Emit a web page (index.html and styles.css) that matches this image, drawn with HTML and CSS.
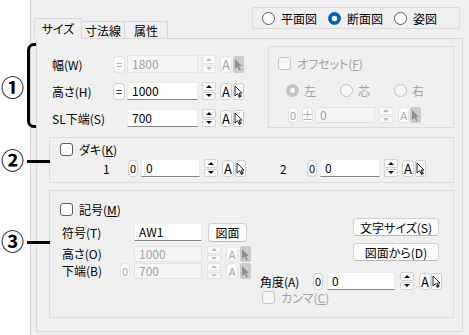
FILE: index.html
```html
<!DOCTYPE html>
<html>
<head>
	<title>size</title>
	<meta charset="utf-8">
	<link rel="stylesheet" href="styles.css">
</head>
<body>
<div class='marks'>
	<span class='num n1'>①</span>
	<span class='brace'></span>
	<span class='num n2'>②</span>
	<span class='tick t2'></span>
	<span class='num n3'>③</span>
	<span class='tick t3'></span>
</div>
<div class='gutter'></div>
<div class='dialog'>
	<div class='head'>
		<div class='tabs'>
			<div class='tab on w48'>サイズ</div>
			<div class='tab w44'>寸法線</div>
			<div class='tab w44'>属性</div>
		</div>
		<div class='views box'>
			<label class='opt'><i class='radio'></i>平面図</label>
			<label class='opt'><i class='radio on'></i>断面図</label>
			<label class='opt'><i class='radio'></i>姿図</label>
		</div>
	</div>
	<div class='panel'>
		<div class='size'>
			<div class='fields'>
				<div class='row'>
					<span class='lbl l61'>幅(W)</span>
					<span class='sq off w12'>=</span>
					<span class='inp off w71 first'>1800</span>
					<span class='spin off'><i></i><i></i></span>
					<span class='btnA off'>A</span>
					<span class='pick off'><svg width='9' height='13' viewBox='0 0 9 13'><path d='M1 1v10l2.5-2.3 1.8 3.8 1.5-.7-1.8-3.7H8z'/></svg></span>
				</div>
				<div class='row'>
					<span class='lbl l61'>高さ(H)</span>
					<span class='sq w12'>=</span>
					<span class='inp w71 first'>1000</span>
					<span class='spin'><i></i><i></i></span>
					<span class='btnA'>A</span>
					<span class='pick'><svg width='9' height='13' viewBox='0 0 9 13'><path d='M1 1v10l2.5-2.3 1.8 3.8 1.5-.7-1.8-3.7H8z'/><path class='dot' d='M5 9.5h2.5v2.5H5z'/></svg></span>
				</div>
				<div class='row'>
					<span class='lbl l61'>SL下端(S)</span>
					<span class='sq blank w12'></span>
					<span class='inp w71 first'>700</span>
					<span class='spin'><i></i><i></i></span>
					<span class='btnA'>A</span>
					<span class='pick'><svg width='9' height='13' viewBox='0 0 9 13'><path d='M1 1v10l2.5-2.3 1.8 3.8 1.5-.7-1.8-3.7H8z'/><path class='dot' d='M5 9.5h2.5v2.5H5z'/></svg></span>
				</div>
			</div>
			<div class='offset box'>
				<label class='check off'><i class='chk'></i><span>オフセット(<span class='key'>F</span>)</span></label>
				<div class='sides'>
					<label class='opt off'><i class='radio on'></i>左</label>
					<label class='opt off'><i class='radio'></i>芯</label>
					<label class='opt off'><i class='radio'></i>右</label>
				</div>
				<div class='row short shift'>
					<span class='sq off w10'>0</span>
					<span class='sq off w11 pm'>±</span>
					<span class='inp off w60'>0</span>
					<span class='spin off'><i></i><i></i></span>
					<span class='btnA off'>A</span>
					<span class='pick off'><svg width='9' height='13' viewBox='0 0 9 13'><path d='M1 1v10l2.5-2.3 1.8 3.8 1.5-.7-1.8-3.7H8z'/></svg></span>
				</div>
			</div>
		</div>
		<div class='daki box'>
			<label class='check'><i class='chk'></i><span>ダキ(<span class='key'>K</span>)</span></label>
			<div class='row pair'>
				<span class='idx one'>1</span>
				<span class='sq w10'>0</span>
				<span class='inp w59'>0</span>
				<span class='spin'><i></i><i></i></span>
				<span class='btnA'>A</span>
				<span class='pick'><svg width='9' height='13' viewBox='0 0 9 13'><path d='M1 1v10l2.5-2.3 1.8 3.8 1.5-.7-1.8-3.7H8z'/><path class='dot' d='M5 9.5h2.5v2.5H5z'/></svg></span>
				<span class='idx two'>2</span>
				<span class='sq w10'>0</span>
				<span class='inp w60'>0</span>
				<span class='spin'><i></i><i></i></span>
				<span class='btnA'>A</span>
				<span class='pick'><svg width='9' height='13' viewBox='0 0 9 13'><path d='M1 1v10l2.5-2.3 1.8 3.8 1.5-.7-1.8-3.7H8z'/><path class='dot' d='M5 9.5h2.5v2.5H5z'/></svg></span>
			</div>
		</div>
		<div class='mark box'>
			<div class='mleft'>
				<label class='check'><i class='chk'></i><span>記号(<span class='key'>M</span>)</span></label>
				<div class='row sym'>
					<span class='lbl l58'>符号(T)</span>
					<span class='sq blank w10'></span>
					<span class='inp w68'>AW1</span>
					<span class='btn draw'>図面</span>
				</div>
				<div class='row short hgt'>
					<span class='lbl l58'>高さ(O)</span>
					<span class='sq blank w10'></span>
					<span class='inp off w68'>1000</span>
					<span class='spin off'><i></i><i></i></span>
					<span class='btnA off'>A</span>
					<span class='pick off'><svg width='9' height='13' viewBox='0 0 9 13'><path d='M1 1v10l2.5-2.3 1.8 3.8 1.5-.7-1.8-3.7H8z'/></svg></span>
				</div>
				<div class='row short low'>
					<span class='lbl l58'>下端(B)</span>
					<span class='sq off w10'>0</span>
					<span class='inp off w68'>700</span>
					<span class='spin off'><i></i><i></i></span>
					<span class='btnA off'>A</span>
					<span class='pick off'><svg width='9' height='13' viewBox='0 0 9 13'><path d='M1 1v10l2.5-2.3 1.8 3.8 1.5-.7-1.8-3.7H8z'/></svg></span>
				</div>
			</div>
			<div class='mright'>
				<span class='btn wide'>文字サイズ(S)</span>
				<span class='btn wide'>図面から(D)</span>
				<div class='row angle'>
					<span class='lbl l53'>角度(A)</span>
					<span class='sq w10'>0</span>
					<span class='inp w68'>0</span>
					<span class='spin'><i></i><i></i></span>
					<span class='btnA'>A</span>
					<span class='pick'><svg width='9' height='13' viewBox='0 0 9 13'><path d='M1 1v10l2.5-2.3 1.8 3.8 1.5-.7-1.8-3.7H8z'/><path class='dot' d='M5 9.5h2.5v2.5H5z'/></svg></span>
				</div>
				<label class='check off comma'><i class='chk'></i><span>カンマ(<span class='key'>C</span>)</span></label>
			</div>
		</div>
	</div>
</div>
</body>
</html>
```

FILE: styles.css
```css
body {
	margin: 0;
	width: 469px;
	height: 335px;
	overflow: hidden;
	display: flex;
	position: relative;
	background: #fff;
	color: #000;
	font: 12px "Noto Sans CJK JP", sans-serif;
	font-feature-settings: "palt";
}
.key {
	text-decoration: underline;
	text-decoration-thickness: 1px;
	text-underline-offset: 1px;
}

/* annotations drawn over the dialog */
.marks {
	position: absolute;
	top: 0;
	left: 0;
	width: 60px;
	height: 335px;
	z-index: 5;
	pointer-events: none;
}
.num {
	position: absolute;
	left: 1px;
	font: bold 23px/1 "Noto Sans CJK JP", sans-serif;
}
.n1 {
	top: 75px;
}
.n2 {
	top: 148px;
}
.n3 {
	top: 229px;
}
.brace {
	position: absolute;
	left: 27px;
	top: 43px;
	width: 9px;
	height: 85px;
	box-sizing: border-box;
	border: 3px solid #000;
	border-right: none;
	border-radius: 7px 0 0 7px;
}
.tick {
	position: absolute;
	left: 27px;
	width: 23px;
	height: 3px;
	background: #000;
}
.t2 {
	top: 160px;
}
.t3 {
	top: 241px;
}

.gutter {
	width: 30px;
	flex: none;
}
.dialog {
	flex: 1;
	background: #f0f0f0;
	border-left: 1px solid #cfcfcf;
	display: flex;
	flex-direction: column;
}
.head {
	height: 38px;
	display: flex;
	flex: none;
}
.tabs {
	display: flex;
	align-items: flex-end;
	margin-left: 4px;
}
.tab {
	height: 17px;
	box-sizing: border-box;
	border: 1px solid #d9d9d9;
	border-bottom: none;
	margin-left: -1px;
	display: flex;
	align-items: center;
	justify-content: center;
}
.tab.on {
	height: 21px;
	margin-bottom: -1px;
	padding-bottom: 1px;
	background: #f0f0f0;
	position: relative;
	z-index: 1;
}
.w48 {
	width: 48px;
}
.w44 {
	width: 44px;
}
.box {
	border: 1px solid #dcdcdc;
	box-sizing: border-box;
}
.views {
	margin: 7px 9px 0 auto;
	width: 208px;
	height: 22px;
	display: flex;
	align-items: center;
	padding-left: 9px;
}
.views .opt {
	margin-right: 11px;
}
.opt {
	display: flex;
	align-items: center;
	gap: 6px;
}
.radio {
	width: 13px;
	height: 13px;
	box-sizing: border-box;
	border: 1px solid #5c5c5c;
	border-radius: 50%;
	background: #fff;
}
.radio.on {
	border-color: #005fb8;
	background: radial-gradient(circle, #fff 2.4px, #005fb8 3.2px);
}
.off {
	color: #a3a3a3;
}
.off .radio {
	border-color: #c2c2c2;
	background: #f6f6f6;
}
.off .radio.on {
	border-color: #c2c2c2;
	background: radial-gradient(circle, #fff 2px, #c2c2c2 2.8px);
}
.check {
	display: flex;
	align-items: center;
	gap: 6px;
	height: 13px;
}
.chk {
	width: 13px;
	height: 13px;
	box-sizing: border-box;
	border: 1px solid #5c5c5c;
	border-radius: 3px;
	background: #fff;
}
.off .chk {
	border-color: #c6c6c6;
	background: #f6f6f6;
}

.panel {
	margin-left: 5px;
	width: 427px;
	height: 294px;
	box-sizing: border-box;
	border: 1px solid #d9d9d9;
	background: #f0f0f0;
	padding: 0 8px 0 12px;
}
.size {
	height: 98px;
	display: flex;
}
.fields {
	width: 219px;
	box-sizing: border-box;
	padding: 16px 0 0 3px;
	display: flex;
	flex-direction: column;
	gap: 9px;
}
.row {
	display: flex;
	align-items: center;
	height: 18px;
}
.row.short {
	height: 16px;
}
.lbl {
	flex: none;
}
.short .lbl {
	line-height: 16px;
}
.l61 {
	width: 61px;
}
.l58 {
	width: 58px;
}
.l53 {
	width: 53px;
}
.sq {
	height: 17px;
	box-sizing: border-box;
	border: 1px solid #cfcfcf;
	border-radius: 4px;
	background: #fdfdfd;
	display: flex;
	align-items: center;
	justify-content: center;
	flex: none;
	font-size: 11px;
	line-height: 1;
}
.short .sq {
	height: 16px;
}
.sq.off {
	border-color: #e2e2e2;
}
.sq.blank {
	visibility: hidden;
}
.w12 {
	width: 12px;
}
.w11 {
	width: 11px;
}
.w10 {
	width: 10px;
}
.inp {
	height: 18px;
	box-sizing: border-box;
	margin-left: 3px;
	padding: 0 4px;
	background: #fff;
	border: 1px solid #ececec;
	border-bottom-color: #868686;
	display: flex;
	align-items: center;
	flex: none;
	line-height: 1;
}
.inp.off {
	background: #f5f5f5;
	border-color: #e3e3e3;
}
.short .inp {
	height: 16px;
}
.inp.first {
	margin-left: 2px;
}
.w71 {
	width: 71px;
}
.w68 {
	width: 68px;
}
.w60 {
	width: 60px;
}
.w59 {
	width: 59px;
}
.spin {
	width: 14px;
	height: 18px;
	margin-left: 4px;
	display: flex;
	flex-direction: column;
	gap: 1px;
	flex: none;
}
.short .spin {
	height: 16px;
}
.spin i {
	flex: 1;
	border: 1px solid #d2d2d2;
	border-radius: 2px;
	background: #fbfbfb;
	display: flex;
	align-items: center;
	justify-content: center;
}
.spin i::after {
	content: '';
	border-left: 3px solid transparent;
	border-right: 3px solid transparent;
}
.spin i:first-child::after {
	border-bottom: 3px solid #111;
}
.spin i:last-child::after {
	border-top: 3px solid #111;
}
.spin.off i {
	border-color: #e4e4e4;
}
.spin.off i:first-child::after {
	border-bottom-color: #bdbdbd;
}
.spin.off i:last-child::after {
	border-top-color: #bdbdbd;
}
.btnA {
	width: 12px;
	height: 17px;
	margin-left: 4px;
	box-sizing: border-box;
	border: 1px solid #cfcfcf;
	border-radius: 4px;
	background: #fdfdfd;
	display: flex;
	align-items: center;
	justify-content: center;
	flex: none;
	font-size: 13px;
	line-height: 1;
}
.short .btnA {
	height: 16px;
	font-size: 11px;
}
.btnA.off {
	border-color: #e2e2e2;
	color: #a3a3a3;
}
.pick {
	width: 11px;
	height: 17px;
	margin-left: 1px;
	box-sizing: border-box;
	border: 1px solid #cfcfcf;
	border-radius: 2px;
	background: #fdfdfd;
	display: flex;
	align-items: center;
	justify-content: center;
	flex: none;
}
.short .pick {
	height: 16px;
}
.pick path {
	fill: #fff;
	stroke: #111;
	stroke-width: 0.9;
}
.pick path.dot {
	fill: #444;
	stroke: none;
}
.pick.off {
	background: #cbcbcb;
	border-color: #cbcbcb;
}
.pick.off path {
	fill: #8e8e8e;
	stroke: none;
}

.offset {
	margin-top: 7px;
	width: 186px;
	height: 82px;
	padding: 10px 0 0 9px;
}
.sides {
	display: flex;
	align-items: center;
	height: 13px;
	margin: 14px 0 0 8px;
	gap: 24px;
}
.sides .opt {
	gap: 5px;
}
.shift {
	margin: 10px 0 0 10px;
}
.pm {
	margin-left: 4px;
}
.shift .inp {
	margin-left: 2px;
}
.shift .btnA {
	margin-left: 5px;
	width: 11px;
}

.daki {
	height: 46px;
	padding: 5px 0 0 10px;
}
.pair {
	margin-top: 3px;
}
.idx {
	flex: none;
}
.one {
	margin-left: 43px;
	width: 25px;
}
.two {
	margin-left: 34px;
	width: 27px;
}

.mark {
	margin-top: 7px;
	height: 128px;
	display: flex;
}
.mleft {
	width: 210px;
	box-sizing: border-box;
	padding: 12px 0 0 10px;
}
.mleft .row {
	margin-left: 2px;
}
.sym {
	margin-top: 7px;
}
.hgt {
	margin-top: 5px;
}
.low {
	margin-top: 1px;
}
.mleft .inp {
	margin-left: 4px;
}
.mleft .spin,
.mleft .btnA {
	margin-left: 5px;
}
.mleft .pick {
	margin-left: 2px;
}
.btn {
	height: 19px;
	box-sizing: border-box;
	border: 1px solid #d0d0d0;
	border-bottom-color: #b9b9b9;
	border-radius: 4px;
	background: #fdfdfd;
	display: flex;
	align-items: center;
	justify-content: center;
	flex: none;
}
.draw {
	width: 39px;
	margin-left: 6px;
}
.mright {
	flex: 1;
	padding-top: 27px;
	display: flex;
	flex-direction: column;
	align-items: flex-start;
}
.wide {
	width: 86px;
	height: 18px;
	margin: 0 0 7px 93px;
}
.angle {
	margin-top: 4px;
}
.angle .inp {
	margin-left: 4px;
}
.angle .spin,
.angle .btnA {
	margin-left: 5px;
}
.angle .pick {
	margin-left: 0;
}
.comma {
	margin: 1px 0 0 2px;
}
```
